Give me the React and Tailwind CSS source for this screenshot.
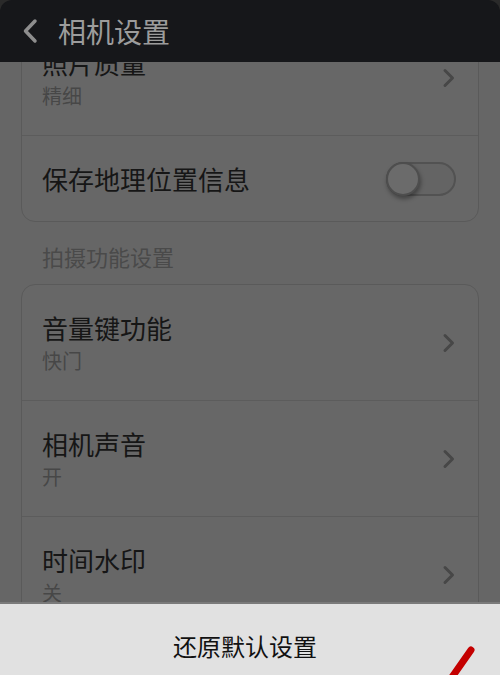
import React from "react";

const font = { fontFamily: '"Noto Sans CJK SC", "Noto Sans", sans-serif' };

function Chevron() {
  return (
    <svg width="14" height="20" viewBox="0 0 14 20" className="shrink-0">
      <path d="M3 2.5 L10.5 10 L3 17.5" fill="none" stroke="#474747" strokeWidth="3" strokeLinecap="round" strokeLinejoin="round" />
    </svg>
  );
}

function Row({ title, sub, divider = true }) {
  return (
    <div className={"flex h-[116px] items-center justify-between pl-[20px] pr-[22px] " + (divider ? "border-b border-[#5c5c5c]" : "")}>
      <div className="flex flex-col">
        <div className="text-[26px] leading-[32px] text-[#161616]">{title}</div>
        <div className="mt-[4px] text-[20px] leading-[26px] text-[#474747]">{sub}</div>
      </div>
      <Chevron />
    </div>
  );
}

export default function App() {
  return (
    <div className="relative h-[675px] w-[500px] overflow-hidden bg-[#666666]" style={font}>
      {/* content */}
      <div className="flex flex-col px-[21px] pt-[19px]">
        <div className="rounded-[14px] border border-[#5a5a5a] bg-[#676767]">
          <Row title="照片质量" sub="精细" />
          <div className="flex h-[85px] items-center justify-between pl-[20px] pr-[22px]">
            <div className="text-[26px] leading-[32px] text-[#161616]">保存地理位置信息</div>
            <div className="relative h-[34px] w-[70px] rounded-full border-2 border-[#525252] bg-[#646464]">
              <div className="absolute left-[-2px] top-[-2px] h-[34px] w-[34px] rounded-full border-2 border-[#4e4e4e] bg-[#6b6b6b] shadow-[1px_3px_4px_rgba(0,0,0,0.35)]" />
            </div>
          </div>
        </div>
        <div className="flex h-[62px] items-center pl-[21px] pt-[6px] text-[22px] text-[#4a4a4a]">拍摄功能设置</div>
        <div className="rounded-[14px] border border-[#5a5a5a] bg-[#676767]">
          <Row title="音量键功能" sub="快门" />
          <Row title="相机声音" sub="开" />
          <Row title="时间水印" sub="关" />
        </div>
      </div>

      {/* header */}
      <div className="absolute left-0 top-0 w-full bg-[#2a2a2a]">
        <div className="flex h-[62px] items-center rounded-t-[12px] bg-[#16171a] pl-[22px]">
          <svg width="16" height="26" viewBox="0 0 16 26">
            <path d="M13 3 L3.5 13 L13 23" fill="none" stroke="#8e8e8e" strokeWidth="3.5" strokeLinecap="round" strokeLinejoin="round" />
          </svg>
          <div className="ml-[20px] text-[28px] leading-[34px] text-[#9c9c9c]">相机设置</div>
        </div>
      </div>

      {/* bottom sheet */}
      <div className="absolute bottom-0 left-0 flex h-[73px] w-full justify-center border-t-2 border-[#7a7a7a] bg-[#e1e1e1] pr-[10px] pt-[27px]">
        <div className="text-[24px] leading-[30px] text-[#111111]">还原默认设置</div>
      </div>

      {/* red annotation stroke */}
      <svg className="absolute left-[440px] top-[640px]" width="40" height="35" viewBox="0 0 40 35">
        <path d="M31 10 L10 40" fill="none" stroke="#c40000" strokeWidth="7" strokeLinecap="round" />
      </svg>
    </div>
  );
}
